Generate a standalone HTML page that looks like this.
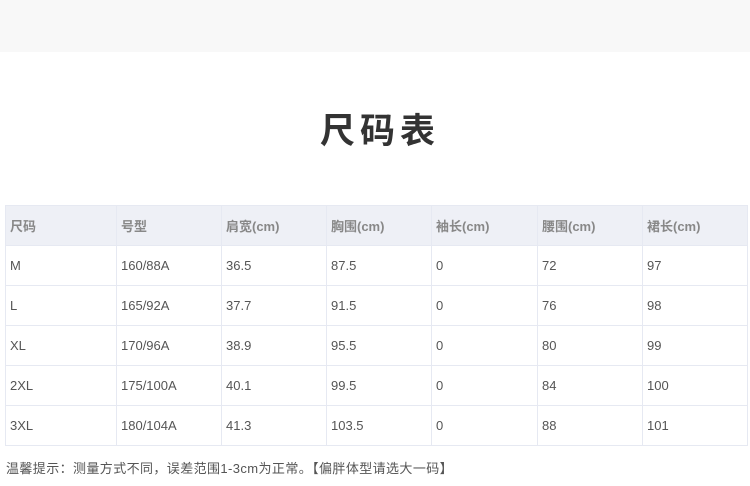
<!DOCTYPE html>
<html><head><meta charset="utf-8"><style>
body{margin:0;width:750px;height:486px;background:#fff;font-family:"Liberation Sans","Noto Sans CJK SC",sans-serif;position:relative;overflow:hidden}
.top{position:absolute;left:0;top:0;width:750px;height:52px;background:#f8f8f8}
.title{position:absolute;left:5px;width:750px;top:110px;text-align:center;font-size:35px;font-weight:bold;color:#333;letter-spacing:5px;line-height:44px}
table{position:absolute;left:5px;top:205px;border-collapse:collapse;table-layout:fixed}
td{border:1px solid #e6e9f2;height:39px;padding:0 0 0 4px;font-size:13px;color:#555;vertical-align:middle}
tr.h td{background:#eef0f6;color:#888;font-weight:bold}
.note{position:absolute;left:6px;top:458px;font-size:13px;color:#555;letter-spacing:0.4px}
</style></head><body>
<div class="top"></div>
<div class="title">尺码表</div>
<table>
<colgroup><col style="width:111px"><col style="width:105px"><col style="width:105px"><col style="width:105px"><col style="width:106px"><col style="width:105px"><col style="width:105px"></colgroup>
<tr class="h"><td>尺码</td><td>号型</td><td>肩宽(cm)</td><td>胸围(cm)</td><td>袖长(cm)</td><td>腰围(cm)</td><td>裙长(cm)</td></tr>
<tr><td>M</td><td>160/88A</td><td>36.5</td><td>87.5</td><td>0</td><td>72</td><td>97</td></tr>
<tr><td>L</td><td>165/92A</td><td>37.7</td><td>91.5</td><td>0</td><td>76</td><td>98</td></tr>
<tr><td>XL</td><td>170/96A</td><td>38.9</td><td>95.5</td><td>0</td><td>80</td><td>99</td></tr>
<tr><td>2XL</td><td>175/100A</td><td>40.1</td><td>99.5</td><td>0</td><td>84</td><td>100</td></tr>
<tr><td>3XL</td><td>180/104A</td><td>41.3</td><td>103.5</td><td>0</td><td>88</td><td>101</td></tr>
</table>
<div class="note">温馨提示：测量方式不同，误差范围1-3cm为正常。【偏胖体型请选大一码】</div>
</body></html>
